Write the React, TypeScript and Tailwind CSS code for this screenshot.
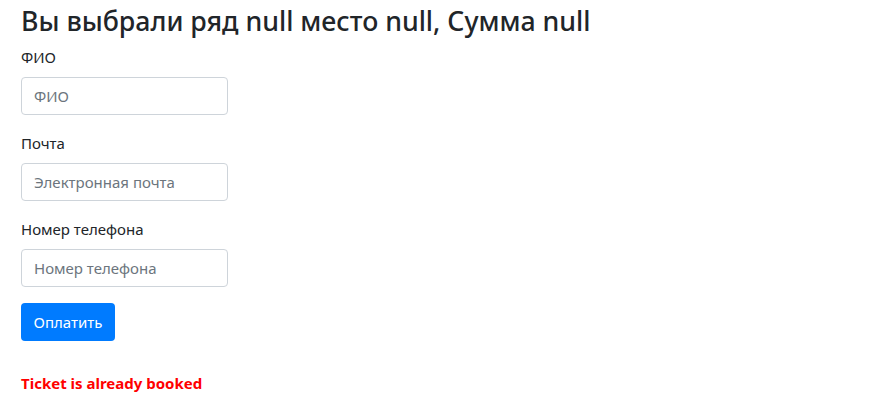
export default function App() {
  const fields = [
    { label: 'ФИО', placeholder: 'ФИО' },
    { label: 'Почта', placeholder: 'Электронная почта' },
    { label: 'Номер телефона', placeholder: 'Номер телефона' },
  ];

  return (
    <div className="min-h-screen bg-white pl-[21px] pt-[5px] text-[#212529] [font-family:'Noto_Sans',Roboto,sans-serif]">
      <h4 className="mb-2 text-[26.7px] leading-[1.2] font-medium">
        Вы выбрали ряд null место null, Сумма null
      </h4>
      <form onSubmit={(e) => e.preventDefault()}>
        {fields.map((f) => (
          <div key={f.label} className="mb-4">
            <label className="mb-2 block text-[15px] leading-6">{f.label}</label>
            <input
              type="text"
              placeholder={f.placeholder}
              className="block h-[38px] w-[207px] rounded border border-[#ced4da] px-3 text-[15px] text-[#495057] placeholder:text-[#6c757d]"
            />
          </div>
        ))}
        <button
          type="submit"
          className="h-[38px] w-[94px] rounded bg-[#007bff] text-[15px] text-white"
        >
          Оплатить
        </button>
      </form>
      <p className="mt-[30px] text-[15px] leading-6 font-bold text-[#ff0000]">
        Ticket is already booked
      </p>
    </div>
  );
}
